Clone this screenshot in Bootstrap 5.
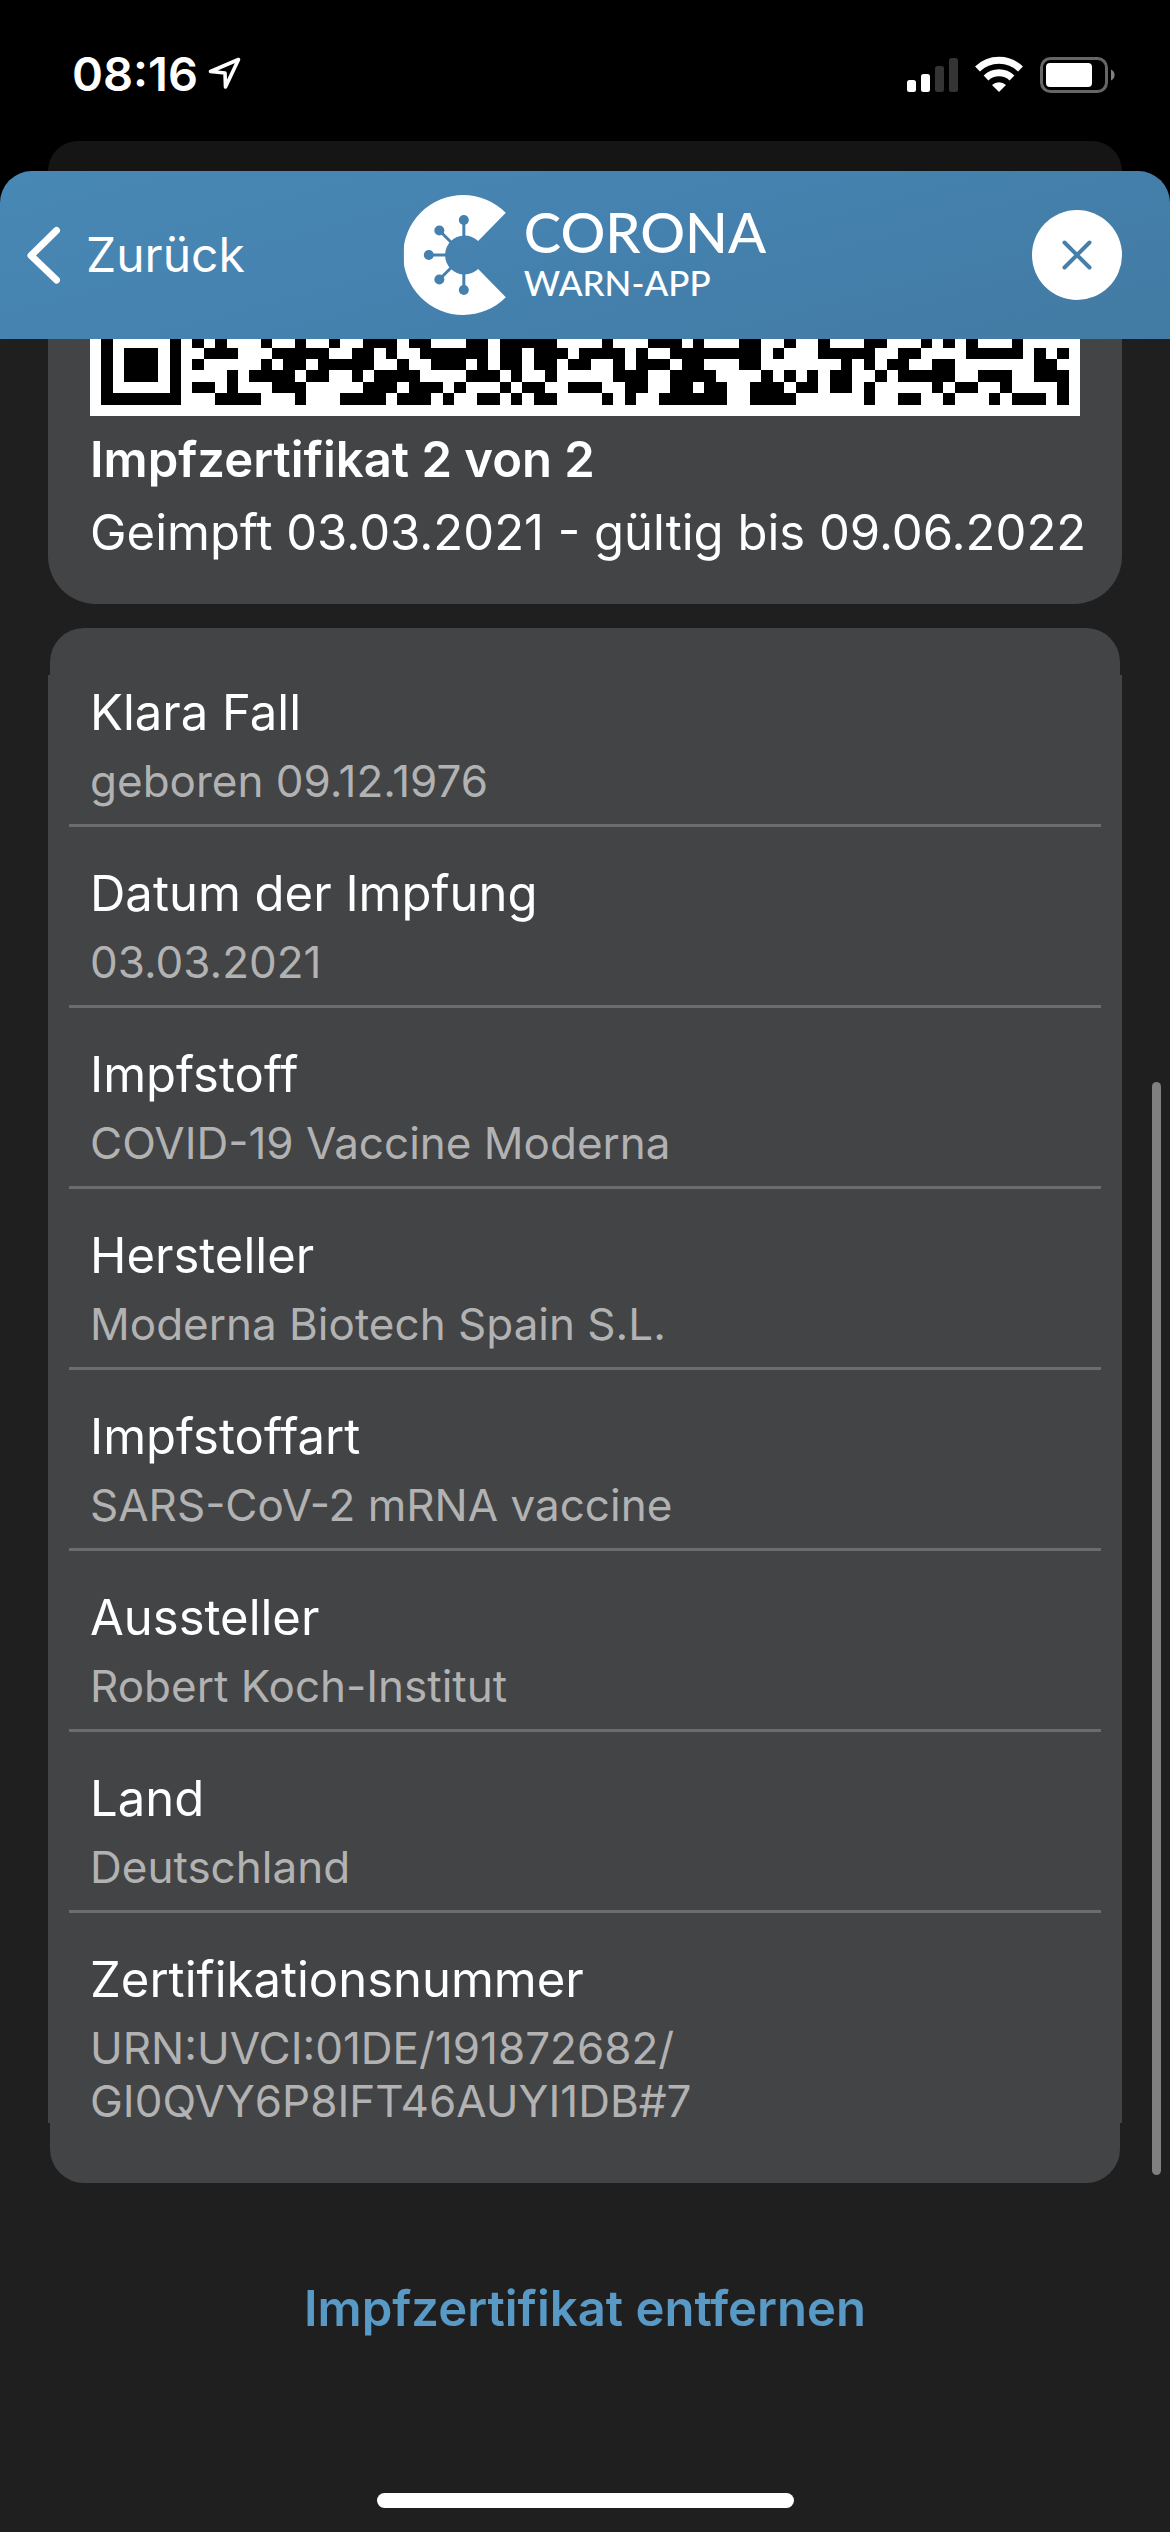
<!DOCTYPE html>
<html lang="de">
<head>
<meta charset="utf-8">
<meta name="viewport" content="width=device-width, initial-scale=1">
<title>Corona-Warn-App – Impfzertifikat</title>
<link href="https://cdn.jsdelivr.net/npm/bootstrap@5.3.0/dist/css/bootstrap.min.css" rel="stylesheet">
<style>
  :root { --page: #1f1f1f; --panel: #434446; --rule: #6b6c6e; --soft: #b2b2b3; --accent: #5899c5; }
  body { background: var(--page); color: #fff; font-family: Inter, "Liberation Sans", sans-serif; font-size: 49px; line-height: 60px; }
  .status-bar { height: 141px; padding: 6px 55px 0 72px; font-size: 47px; }
  .top-area { background: #000; }
  .sheet-behind { height: 30px; background: #151515; border-radius: 30px 30px 0 0; }
  .app-bar { height: 168px; border-radius: 32px 32px 0 0; padding: 0 48px 0 26px; background: linear-gradient(165deg, #4888b5, #4581ae 50%, #427ba3); }
  .app-bar .btn-back { color: #fff; font-size: 48px; line-height: 60px; gap: 24px; }
  .brand-name { font-family: Lato, "Liberation Sans", sans-serif; font-weight: 500; padding-bottom: 4px; }
  .brand-big { font-size: 56px; line-height: 58px; }
  .brand-small { font-size: 35px; line-height: 42px; }
  .btn-round { width: 90px; height: 90px; background: #fff; }
  .gutter { padding-left: 48px; padding-right: 48px; }
  .qr-card { background: var(--panel); border-radius: 0 0 48px 48px; padding: 0 42px 35px; }
  .qr-code { height: 77px; background: #fff; margin-bottom: 7px; }
  .qr-card .caption-line { line-height: 73px; }
  .details-wrap { margin-top: 24px; background: linear-gradient(var(--panel), var(--panel)) 0 47px / 100% calc(100% - 107px) no-repeat; }
  .details { background: var(--panel); border-radius: 34px; margin: 0 2px; padding: 18px 19px 39px; }
  .details .list-group { --bs-list-group-bg: transparent; --bs-list-group-color: #fff; --bs-list-group-border-color: var(--rule); --bs-list-group-item-padding-x: 21px; }
  .details .list-group-item { padding-top: 37px; padding-bottom: 16px; border-width: 0 0 3px; }
  .details .list-group-item:last-child { border-bottom: 0; }
  .entry-value { font-size: 44px; line-height: 53px; margin-top: 12px; color: var(--soft); }
  .btn-remove { color: var(--accent); font-size: 49px; line-height: 60px; }
  .remove-area { padding-top: 92px; }
  .scroll-thumb { position: absolute; right: 9px; top: 1082px; width: 9px; height: 1093px; border-radius: 5px; background: #808080; }
  .home-area { padding: 80px 0 24px; }
  .home-pill { width: 417px; height: 15px; border-radius: 8px; background: #fff; }
</style>
</head>
<body class="d-flex flex-column min-vh-100 position-relative">

<div class="top-area">
  <div class="status-bar d-flex align-items-center justify-content-between">
    <div class="d-flex align-items-center gap-2">
      <span class="fw-semibold">08:16</span>
      <svg width="36" height="36" viewBox="0 0 36 36" fill="none" stroke="#fff" stroke-width="3.6" stroke-linejoin="round" aria-hidden="true"><path d="M4.500 15.500 32.500 3.500 19.500 31 19 17Z"/></svg>
    </div>
    <svg width="208" height="38" viewBox="0 0 208 38" aria-label="Mobilfunk, WLAN, Akku" role="img">
      <g fill="#fff"><rect x="0" y="25" width="9" height="12" rx="2.500"/><rect x="14" y="19" width="9" height="18" rx="2.500"/></g>
      <g fill="#343434"><rect x="28" y="11" width="9" height="26" rx="2.500"/><rect x="42" y="3" width="9" height="34" rx="2.500"/></g>
      <g fill="none" stroke="#fff" stroke-width="7"><path d="M70.500 14A31 31 0 0 1 113.500 14"/><path d="M79 23A19 19 0 0 1 105 23"/></g>
      <path d="M92 37 85 30A10 10 0 0 1 99 30Z" fill="#fff"/>
      <rect x="134.500" y="3.500" width="65" height="33" rx="9" fill="none" stroke="#666" stroke-width="3"/>
      <rect x="139" y="8" width="46" height="24" rx="4" fill="#fff"/>
      <path d="M204 14.500a6 6 0 0 1 0 11Z" fill="#808080"/>
    </svg>
  </div>
  <div class="gutter"><div class="sheet-behind"></div></div>
  <header class="app-bar d-flex align-items-center justify-content-between position-relative">
    <button type="button" class="btn btn-back border-0 p-0 d-flex align-items-center">
      <svg width="36" height="60" viewBox="0 0 36 60" fill="none" stroke="#fff" stroke-width="7" stroke-linecap="round" stroke-linejoin="round" aria-hidden="true"><path d="M30.500 5.500 5 30.500 30.500 55"/></svg>
      <span>Zurück</span>
    </button>
    <div class="position-absolute top-50 start-50 translate-middle d-flex align-items-center">
      <svg width="104" height="120" viewBox="0 0 104 120" aria-hidden="true">
        <path fill="#fff" d="M102 17.800A60 60 0 1 0 102 102.200L74.300 74A19.500 19.500 0 1 1 74.300 46Z"/>
        <g stroke="#4581ae" stroke-width="3"><path d="M60 45V25M49 49 35.500 35.500M45 60H25M49 71 35.500 84.500M60 75V95"/></g>
        <g fill="#4581ae"><circle cx="60" cy="25" r="5"/><circle cx="35.500" cy="35.500" r="5"/><circle cx="25" cy="60" r="5"/><circle cx="35.500" cy="84.500" r="5"/><circle cx="60" cy="95" r="5"/></g>
      </svg>
      <div class="brand-name ms-3">
        <div class="brand-big">CORONA</div>
        <div class="brand-small text-nowrap">WARN-APP</div>
      </div>
    </div>
    <button type="button" class="btn btn-round rounded-circle border-0 p-0 d-flex align-items-center justify-content-center" aria-label="Schließen">
      <svg width="32" height="32" viewBox="0 0 32 32" stroke="#4680aa" stroke-width="4" stroke-linecap="round" aria-hidden="true"><path d="M3.500 3.500 28.500 28.500M28.500 3.500 3.500 28.500"/></svg>
    </button>
  </header>
</div>

<main class="gutter">
  <section class="qr-card">
    <svg class="qr-code d-block w-100" viewBox="0 0 87 7" preserveAspectRatio="xMidYMax slice" shape-rendering="crispEdges" role="img" aria-label="QR-Code">
      <path fill="none" stroke="#000" d="M1 .5h1M7 .5h1M9 .5h1M11 .5h1M15 .5h1M18 .5h1M21 .5h1M24 .5h3M28 .5h2M33 .5h2M36 .5h5M45 .5h1M49 .5h3M53 .5h1M57 .5h2M61 .5h1M64 .5h1M68 .5h2M73 .5h1M75 .5h1M77 .5h1M81 .5h1
      M1 1.500h1M3 1.500h3M7 1.500h1M10 1.500h3M16 1.500h5M23 1.500h2M26 1.500h1M29 1.500h6M36 1.500h2M39 1.500h3M43 1.500h4M48 1.500h1M51 1.500h8M60 1.500h1M64 1.500h5M71 1.500h2M77 1.500h5M83 1.500h1M85 1.500h1
      M1 2.500h1M3 2.500h3M7 2.500h1M9 2.500h1M15 2.500h1M17 2.500h2M20 2.500h5M27 2.500h1M30 2.500h3M34 2.500h1M36 2.500h2M39 2.500h2M42 2.500h2M46 2.500h1M48 2.500h3M52 2.500h2M57 2.500h2M66 2.500h1M68 2.500h1M70 2.500h2M74 2.500h2M83 2.500h2
      M1 3.500h1M3 3.500h3M7 3.500h1M12 3.500h1M14 3.500h4M19 3.500h2M23 3.500h1M25 3.500h4M33 3.500h3M37 3.500h1M40 3.500h1M46 3.500h3M51 3.500h4M59 3.500h1M61 3.500h1M63 3.500h1M65 3.500h2M69 3.500h1M71 3.500h5M78 3.500h3M83 3.500h3
      M1 4.500h1M7 4.500h1M9 4.500h2M12 4.500h1M16 4.500h3M24 4.500h3M28 4.500h3M32 4.500h1M36 4.500h1M38 4.500h2M42 4.500h3M47 4.500h2M51 4.500h2M54 4.500h2M58 4.500h3M62 4.500h2M65 4.500h2M68 4.500h1M74 4.500h1M76 4.500h2M80 4.500h1M85 4.500h1
      M1 5.500h7M11 5.500h4M18 5.500h1M22 5.500h4M27 5.500h3M31 5.500h1M34 5.500h2M37 5.500h1M39 5.500h2M45 5.500h1M47 5.500h1M50 5.500h6M58 5.500h4M68 5.500h1M71 5.500h2M75 5.500h1M79 5.500h1M81 5.500h3M85 5.500h1"/>
    </svg>
    <div class="caption-line fw-semibold">Impfzertifikat 2 von 2</div>
    <div class="caption-line text-nowrap">Geimpft 03.03.2021 - gültig bis 09.06.2022</div>
  </section>

  <section class="details-wrap">
    <div class="details">
      <ul class="list-group list-group-flush">
        <li class="list-group-item"><div>Klara Fall</div><div class="entry-value">geboren 09.12.1976</div></li>
        <li class="list-group-item"><div>Datum der Impfung</div><div class="entry-value">03.03.2021</div></li>
        <li class="list-group-item"><div>Impfstoff</div><div class="entry-value">COVID-19 Vaccine Moderna</div></li>
        <li class="list-group-item"><div>Hersteller</div><div class="entry-value">Moderna Biotech Spain S.L.</div></li>
        <li class="list-group-item"><div>Impfstoffart</div><div class="entry-value">SARS-CoV-2 mRNA vaccine</div></li>
        <li class="list-group-item"><div>Aussteller</div><div class="entry-value">Robert Koch-Institut</div></li>
        <li class="list-group-item"><div>Land</div><div class="entry-value">Deutschland</div></li>
        <li class="list-group-item"><div>Zertifikationsnummer</div><div class="entry-value">URN:UVCI:01DE/191872682/<br>GI0QVY6P8IFT46AUYI1DB#7</div></li>
      </ul>
    </div>
  </section>

  <div class="remove-area text-center">
    <button type="button" class="btn btn-remove border-0 p-0 fw-semibold">Impfzertifikat entfernen</button>
  </div>
</main>

<div class="scroll-thumb"></div>
<div class="home-area mt-auto d-flex justify-content-center"><div class="home-pill"></div></div>

<script src="https://cdn.jsdelivr.net/npm/bootstrap@5.3.0/dist/js/bootstrap.bundle.min.js"></script>
</body>
</html>
